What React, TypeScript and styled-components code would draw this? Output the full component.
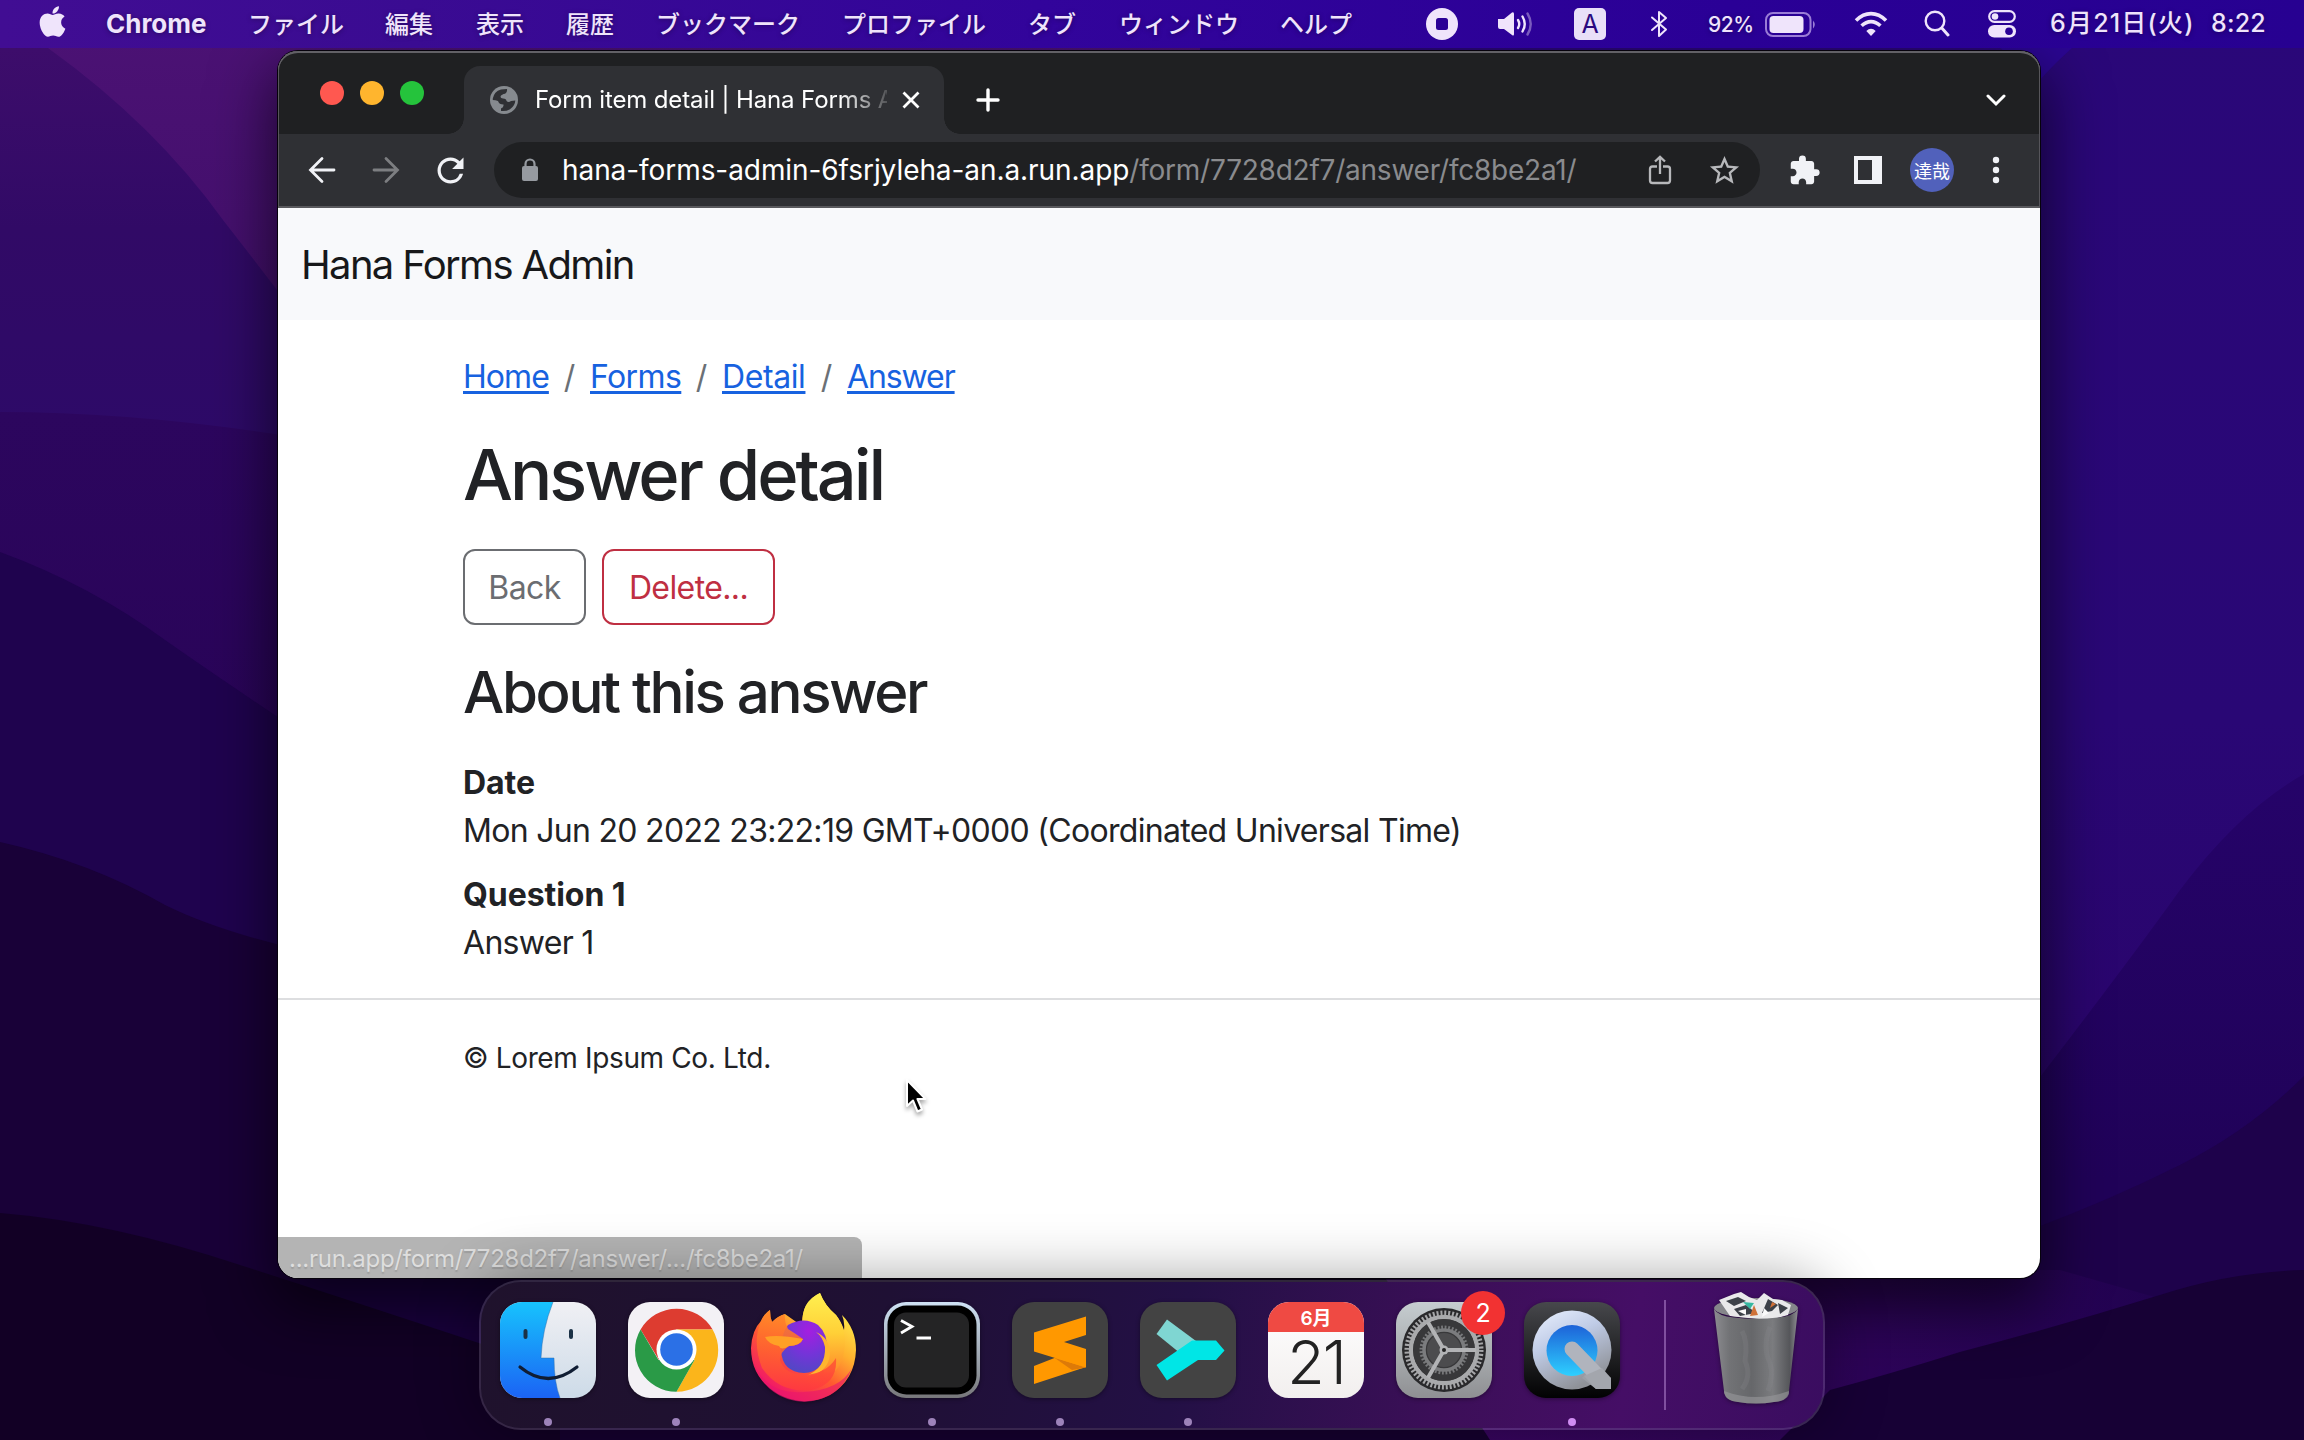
import React from "react";
import styled, { createGlobalStyle } from "styled-components";
import { FaApple } from "react-icons/fa";
import { MdExtension, MdRefresh, MdStarBorder } from "react-icons/md";

const GlobalStyle = createGlobalStyle`
  *, *::before, *::after { box-sizing: border-box; }
  body {
    margin: 0;
    overflow: hidden;
    font-family: Inter, "Noto Sans CJK JP", "Liberation Sans", sans-serif;
  }
`;

const Desktop = styled.div`
  position: relative;
  width: 2304px;
  height: 1440px;
  display: flex;
  flex-direction: column;
  overflow: hidden;
  background: #1a0140;
`;

const WallpaperSvg = styled.svg`
  position: absolute;
  inset: 0;
  z-index: 0;
`;

/* ---------- menu bar ---------- */

const MenuBar = styled.header`
  position: relative;
  z-index: 3;
  height: 48px;
  flex: none;
  display: flex;
  align-items: center;
  justify-content: space-between;
  padding: 0 0 2px 40px;
  background: linear-gradient(90deg, #410d93 0, #3a0b92 18%, #32049b 45%, #2a0096 75%, #270191 100%);
  color: #efe4fb;
  font-size: 24px;
  text-shadow: 0 1px 5px rgba(0, 0, 0, 0.35);
`;

const MenuList = styled.nav`
  display: flex;
  align-items: center;
`;

const AppleMark = styled.span`
  display: flex;
  width: 71px;
  margin: -3px 0 0 -5px;
`;

const AppName = styled.span`
  width: 142px;
  font-size: 26px;
  font-weight: 700;
  letter-spacing: 0;
`;

const MenuItem = styled.span<{ $w: number }>`
  width: ${(p) => p.$w}px;
  font-family: "Noto Sans CJK JP", sans-serif;
  font-weight: 500;
  line-height: 44px;
  white-space: nowrap;
`;

const StatusList = styled.div`
  display: flex;
  align-items: center;
  width: 886px;
`;

const StatusSlot = styled.span<{ $w: number }>`
  width: ${(p) => p.$w}px;
  height: 46px;
  flex: none;
  display: flex;
  align-items: center;
  justify-content: center;
  padding-top: 2px;
`;

const InputSource = styled.span`
  width: 32px;
  height: 32px;
  border-radius: 5px;
  display: flex;
  align-items: center;
  justify-content: center;
  background: #e9e0f8;
  color: #2b0a80;
  font-size: 25px;
  text-shadow: none;
`;

const Percent = styled.span`
  width: 56px;
  flex: none;
  padding-left: 4px;
  padding-top: 3px;
  font-size: 21px;
  font-weight: 500;
  letter-spacing: -0.4px;
`;

const Clock = styled.span<{ $w?: number }>`
  width: ${(p) => (p.$w ? `${p.$w}px` : "auto")};
  flex: none;
  font-size: 25px;
  line-height: 46px;
  font-weight: 500;
  letter-spacing: ${(p) => (p.$w ? "1.2px" : "0.2px")};
  white-space: nowrap;
`;

/* ---------- browser window ---------- */

const BrowserWindow = styled.main`
  position: relative;
  z-index: 1;
  flex: none;
  width: 1762px;
  height: 1227px;
  margin: 3px 0 0 278px;
  display: flex;
  flex-direction: column;
  border-radius: 20px;
  background: #fff;
  box-shadow: 0 0 0 1px #06020c, 0 24px 60px 6px rgba(0, 0, 0, 0.6);
`;

const TabStrip = styled.div`
  height: 83px;
  flex: none;
  display: flex;
  align-items: flex-end;
  background: #1f2022;
  border-radius: 20px 20px 0 0;
  box-shadow: inset 0 2px 0 #626166, inset 1px 0 0 #56555a, inset -1px 0 0 #56555a;
`;

const TrafficLights = styled.div`
  display: flex;
  gap: 16px;
  padding: 0 40px 29px 42px;
`;

const Light = styled.span<{ $c: string }>`
  width: 24px;
  height: 24px;
  border-radius: 50%;
  background: ${(p) => p.$c};
`;

const Tab = styled.div`
  position: relative;
  width: 480px;
  height: 68px;
  display: flex;
  align-items: center;
  padding: 0 22px 0 26px;
  border-radius: 16px 16px 0 0;
  background: #2f3034;
  color: #fff;
  &::before,
  &::after {
    content: "";
    position: absolute;
    bottom: 0;
    width: 16px;
    height: 16px;
  }
  &::before {
    left: -16px;
    background: radial-gradient(circle at 0 0, transparent 15.5px, #2f3034 16px);
  }
  &::after {
    right: -16px;
    background: radial-gradient(circle at 100% 0, transparent 15.5px, #2f3034 16px);
  }
`;

const Favicon = styled.span`
  display: flex;
  flex: none;
  margin-right: 17px;
`;

const TabTitle = styled.span`
  width: 352px;
  flex: none;
  margin: -1px 15px 0 0;
  overflow: hidden;
  white-space: nowrap;
  font-size: 24px;
  letter-spacing: -0.12px;
  mask-image: linear-gradient(90deg, #000 305px, transparent 362px);
`;

const StripButton = styled.span<{ $push?: boolean }>`
  width: 64px;
  height: 68px;
  display: flex;
  align-items: center;
  justify-content: center;
  margin-left: ${(p) => (p.$push ? "auto" : "12px")};
  margin-right: ${(p) => (p.$push ? "12px" : "0")};
`;

const Toolbar = styled.div`
  height: 74px;
  flex: none;
  display: flex;
  align-items: center;
  padding: 0 12px;
  background: #2f3034;
  border-bottom: 2px solid #59595d;
  box-shadow: inset 1px 0 0 #56555a, inset -1px 0 0 #56555a;
`;

const ToolButton = styled.span<{ $c?: string }>`
  width: 64px;
  height: 64px;
  flex: none;
  display: flex;
  align-items: center;
  justify-content: center;
  color: ${(p) => p.$c ?? "#f1f2f6"};
`;

const Omnibox = styled.div`
  width: 1266px;
  height: 56px;
  margin: 0 12px;
  padding: 0 4px 0 26px;
  display: flex;
  align-items: center;
  border-radius: 28px;
  background: #1f2022;
`;

const Url = styled.span`
  flex: 1;
  padding-left: 22px;
  font-size: 28px;
  letter-spacing: -0.07px;
  color: #fff;
  white-space: nowrap;
`;

const UrlPath = styled.span`
  color: #8a8b8e;
  letter-spacing: -0.23px;
`;

const Avatar = styled.span`
  width: 44px;
  height: 44px;
  border-radius: 50%;
  display: flex;
  align-items: center;
  justify-content: center;
  background: #5161bb;
  color: #fff;
  font: 400 18px/44px "Noto Sans CJK JP", sans-serif;
`;

/* ---------- page ---------- */

const Page = styled.div`
  flex: 1;
  display: flex;
  flex-direction: column;
  position: relative;
  overflow: hidden;
  border-radius: 0 0 20px 20px;
  color: #212225;
  font-size: 32px;
  line-height: 48px;
`;

const Navbar = styled.div`
  height: 112px;
  flex: none;
  display: flex;
  align-items: center;
  padding: 2px 23px 0;
  background: #f8f9fb;
  font-size: 40px;
  letter-spacing: -1.65px;
  color: #17181a;
`;

const Container = styled.section`
  padding: 33px 0 31px 185px;
`;

const Breadcrumb = styled.nav`
  display: flex;
  margin-bottom: 32px;
`;

const Crumb = styled.a<{ $w: number; $ls: number }>`
  width: ${(p) => p.$w}px;
  letter-spacing: ${(p) => p.$ls}px;
  color: #1762e0;
  text-decoration: underline;
  text-decoration-thickness: 3px;
  text-underline-offset: 3px;
`;

const CrumbSlash = styled.span`
  width: 41px;
  text-align: center;
  color: #6b7076;
`;

const Title = styled.h1`
  margin: 0 0 32px;
  font-size: 70.4px;
  line-height: 84px;
  font-weight: 550;
  letter-spacing: -3px;
`;

const Actions = styled.div`
  display: flex;
  gap: 16px;
  margin-bottom: 32px;
`;

const OutlineButton = styled.button<{ $c: string; $w: number }>`
  width: ${(p) => p.$w}px;
  height: 76px;
  padding: 1px 0 0;
  border: 2px solid ${(p) => p.$c};
  border-radius: 12px;
  background: transparent;
  color: ${(p) => p.$c};
  font: 400 32px/48px Inter, sans-serif;
  letter-spacing: -0.6px;
`;

const Subtitle = styled.h2`
  margin: 0 0 32px;
  font-size: 58.2px;
  line-height: 70px;
  font-weight: 550;
  letter-spacing: -2.3px;
`;

const Definition = styled.dl`
  margin: 0;
  display: flex;
  flex-direction: column;
`;

const Term = styled.dt`
  font-weight: 700;
  letter-spacing: -0.05px;
`;

const Detail = styled.dd`
  margin: 0 0 16px;
  letter-spacing: -0.7px;
  &:last-child {
    margin-bottom: 0;
  }
`;

const Footer = styled.footer`
  border-top: 2px solid #dddee0;
  padding: 37px 0 0 185px;
  font-size: 28px;
  line-height: 42px;
  letter-spacing: -0.36px;
`;

const StatusBubble = styled.div`
  position: absolute;
  left: 0;
  bottom: 0;
  width: 584px;
  height: 41px;
  padding-left: 11px;
  border-radius: 0 8px 0 0;
  background: #b4b4b4;
  color: #dedede;
  font-size: 24px;
  line-height: 43px;
  letter-spacing: -0.26px;
  white-space: nowrap;
  text-shadow: 0 2px 1px rgba(120, 120, 120, 0.35);
`;

const Cursor = styled.svg`
  position: absolute;
  left: 904px;
  top: 1077px;
  z-index: 4;
  filter: drop-shadow(0 3px 2px rgba(0, 0, 0, 0.35));
`;

/* ---------- dock ---------- */

const Dock = styled.div`
  position: relative;
  z-index: 2;
  flex: none;
  width: 1346px;
  height: 150px;
  margin: 2px 0 0 479px;
  padding: 0 0 0 3px;
  display: flex;
  border-radius: 42px;
  border: 2px solid rgba(255, 255, 255, 0.15);
  background: linear-gradient(100deg, #1f122c 0, #1f1034 30%, #231045 52%, #3c0f58 72%, #450e66 85%, #3a0d60 100%);
  background-clip: padding-box;
  box-shadow: 0 0 60px rgba(0, 0, 0, 0.38);
`;

const DockItem = styled.div<{ $lift?: number }>`
  position: relative;
  width: 128px;
  flex: none;
  display: flex;
  flex-direction: column;
  align-items: center;
  padding-top: ${(p) => 16 - (p.$lift ?? 0)}px;
`;

const Art = styled.svg`
  display: block;
  filter: drop-shadow(0 1px 2px rgba(0, 0, 0, 0.4));
`;

const RunningDot = styled.span<{ $bright?: boolean }>`
  width: 8px;
  height: 8px;
  margin-top: 8px;
  border-radius: 50%;
  background: ${(p) => (p.$bright ? "#d08df2" : "#9d83ba")};
`;

const CalendarTile = styled.div`
  width: 96px;
  height: 96px;
  margin-top: 4px;
  border-radius: 21px;
  overflow: hidden;
  display: flex;
  flex-direction: column;
  align-items: center;
  background: linear-gradient(#ffffff, #f2efee);
`;

const CalendarMonth = styled.span`
  width: 100%;
  height: 30px;
  background: #ef4a43;
  color: #fff;
  text-align: center;
  font: 600 19px/33px Inter, "Noto Sans CJK JP", sans-serif;
`;

const CalendarDay = styled.span`
  font-size: 61px;
  line-height: 60px;
  font-weight: 300;
  letter-spacing: -2px;
  color: #222;
`;

const Badge = styled.span`
  position: absolute;
  top: 9px;
  left: 81px;
  width: 44px;
  height: 44px;
  border-radius: 50%;
  background: #f23232;
  color: #fff;
  text-align: center;
  font-size: 25px;
  line-height: 44px;
`;

const DockDivider = styled.span`
  width: 2px;
  height: 110px;
  flex: none;
  margin: 18px 26px 0 28px;
  background: rgba(214, 170, 240, 0.42);
`;

const Wallpaper = () => (
  <WallpaperSvg width="2304" height="1440" viewBox="0 0 2304 1440">
    <defs>
      <linearGradient id="wpTop" x1="0" y1="0" x2="0" y2="1">
        <stop offset="0" stopColor="#4c1275" />
        <stop offset="1" stopColor="#3d0e66" />
      </linearGradient>
      <linearGradient id="wpA" x1="0" y1="0" x2="0" y2="1">
        <stop offset="0" stopColor="#3d0d6b" />
        <stop offset="0.45" stopColor="#310a66" />
        <stop offset="1" stopColor="#2d0a68" />
      </linearGradient>
      <linearGradient id="wpB" x1="0" y1="0" x2="0" y2="1">
        <stop offset="0" stopColor="#2c065e" />
        <stop offset="1" stopColor="#290458" />
      </linearGradient>
      <linearGradient id="wpRight" x1="0" y1="0" x2="0" y2="1">
        <stop offset="0" stopColor="#2a0779" />
        <stop offset="0.5" stopColor="#290775" />
        <stop offset="1" stopColor="#2b0263" />
      </linearGradient>
      <linearGradient id="wpRightLow" gradientUnits="userSpaceOnUse" x1="2304" y1="780" x2="2304" y2="1180">
        <stop offset="0" stopColor="#250369" />
        <stop offset="1" stopColor="#200258" />
      </linearGradient>
      <linearGradient id="wpBottom" x1="0" y1="0" x2="1" y2="0">
        <stop offset="0" stopColor="#43046a" />
        <stop offset="0.55" stopColor="#33055c" />
        <stop offset="1" stopColor="#200250" />
      </linearGradient>
    </defs>
    <rect width="1200" height="460" fill="url(#wpTop)" />
    <path d="M0 48 H48 Q155 125 223 220 Q262 270 300 320 V450 H0Z" fill="url(#wpA)" />
    <path d="M0 412 Q140 412 300 438 V760 H0Z" fill="url(#wpB)" />
    <path d="M0 552 Q90 585 165 640 Q215 675 300 732 V980 H0Z" fill="#1f034e" />
    <path d="M0 842 Q90 862 165 905 Q215 930 300 950 V1400 H0Z" fill="#190138" />
    <path d="M0 1213 Q110 1222 240 1265 Q380 1310 560 1370 T1500 1440 H0Z" fill="#120025" />
    <rect x="1200" y="0" width="1104" height="1440" fill="url(#wpRight)" />
    <path d="M2000 48 H2072 Q2054 64 2040 80Z" fill="#2b0692" />
    <path d="M2304 774 Q2240 810 2180 890 Q2130 960 2030 1090 V1440 H2304Z" fill="url(#wpRightLow)" />
    <path d="M2304 1076 Q2250 1130 2180 1165 Q2110 1200 2030 1230 V1440 H2304Z" fill="#1e024b" />
    <path d="M1100 1270 H2060 L2200 1310 L2040 1440 H1100Z" fill="url(#wpBottom)" />
    <path d="M560 1270 H1380 L1490 1440 H560Z" fill="#160030" />
    <path d="M2304 1270 Q2230 1272 2160 1295 Q2060 1326 1960 1352 Q1890 1374 1830 1390 L1780 1440 H2304Z" fill="#170135" />
  </WallpaperSvg>
);

const VolumeIcon = () => (
  <svg width="38" height="30" viewBox="0 0 38 30" fill="none" strokeLinecap="round">
    <path d="M1 10 H7 L15 3.5 Q17 2.500 17 5 V25 Q17 27.500 15 26 L7 20 H3 Q1 20 1 18Z" fill="#efe4fb" />
    <path d="M21 11 Q23.500 15 21 19" stroke="#efe4fb" strokeWidth="2.400" />
    <path d="M25.500 7.500 Q30 15 25.500 22.500" stroke="#efe4fb" strokeWidth="2.400" />
    <path d="M30.500 4.500 Q37 15 30.500 25.500" stroke="#efe4fb" strokeWidth="2.400" opacity=".4" />
  </svg>
);

const BluetoothIcon = () => (
  <svg width="18" height="28" viewBox="0 0 18 28" fill="none" stroke="#efe4fb" strokeWidth="2" strokeLinejoin="round" strokeLinecap="round">
    <path d="M2 7.500 L16 19.500 L9 26 V2 L16 8 L2 20" />
  </svg>
);

const BatteryIcon = () => (
  <svg width="52" height="25" viewBox="0 0 52 25" fill="none">
    <rect x="1" y="1" width="44.500" height="23" rx="7" stroke="#9a7cd6" strokeWidth="2" />
    <rect x="4.500" y="4" width="34" height="17" rx="4" fill="#efe4fb" />
    <path d="M48 8.500 Q51.500 12.500 48 16.500Z" fill="#9a7cd6" />
  </svg>
);

const WifiIcon = () => (
  <svg width="34" height="26" viewBox="0 0 34 26" fill="none" stroke="#efe4fb" strokeWidth="3.600">
    <path d="M2 9.500 Q9 2.600 17 2.600 Q25 2.600 32 9.500" />
    <path d="M7.600 14.800 Q12 10.600 17 10.600 Q22 10.600 26.400 14.800" />
    <path d="M12.300 20 Q17 15.500 21.700 20 L17 25Z" fill="#efe4fb" stroke="none" />
  </svg>
);

const SearchIcon = () => (
  <svg width="26" height="28" viewBox="0 0 26 28" fill="none" stroke="#efe4fb" strokeWidth="2.400" strokeLinecap="round">
    <circle cx="11" cy="11" r="9.300" />
    <path d="M17.800 18 L24 25" strokeWidth="3" />
  </svg>
);

const ControlIcon = () => (
  <svg width="28" height="28" viewBox="0 0 28 28">
    <rect x="1.200" y="1.200" width="25.600" height="10.600" rx="5.300" fill="none" stroke="#efe4fb" strokeWidth="2.200" />
    <circle cx="7" cy="6.500" r="3.300" fill="#efe4fb" />
    <rect x="0" y="15" width="28" height="12.500" rx="6.250" fill="#efe4fb" />
    <circle cx="21" cy="21.250" r="3.800" fill="#2a0096" />
  </svg>
);

const GlobeIcon = () => (
  <svg width="28" height="28" viewBox="0 0 28 28">
    <circle cx="14" cy="14" r="14" fill="#868a8f" />
    <path d="M2.800 12.500 Q4 5.500 11 3.400 L17 3 Q17.500 7.500 13.500 8 L11 9.500 Q9.500 12.500 13 12.500 Q16.500 12.500 16.500 15 Q18.500 16.800 21 15 L25.300 14.500 Q25 20 20 23.200 Q16 25.600 11 25 V22.500 Q14 21.500 13.500 18.500 Q9 18.500 8 15 Q5.500 14 2.800 14Z" fill="#2f3034" />
  </svg>
);

const FinderArt = () => (
  <Art width="98" height="112" viewBox="-1 -4 98 112">
    <defs>
      <linearGradient id="fiB" x1="0" y1="0" x2="0" y2="1">
        <stop offset="0" stopColor="#17c3fd" />
        <stop offset="1" stopColor="#1b63f4" />
      </linearGradient>
      <linearGradient id="fiW" x1="0" y1="0" x2="0" y2="1">
        <stop offset="0" stopColor="#f0f0f4" />
        <stop offset="1" stopColor="#cddbe8" />
      </linearGradient>
      <clipPath id="fiC">
        <rect width="96" height="96" rx="22" />
      </clipPath>
    </defs>
    <g clipPath="url(#fiC)">
      <rect width="96" height="96" fill="url(#fiW)" />
      <path d="M0 0 H53 Q42 28 41 56 H54 Q54 80 60 96 H0Z" fill="url(#fiB)" />
    </g>
    <path d="M53 0 Q42 28 41 56 H54 Q54 80 60 96" fill="none" stroke="#2d6ea8" strokeWidth=".8" opacity=".6" />
    <path d="M25.500 29 V35 M71 29 V35" stroke="#1b3146" strokeWidth="4" strokeLinecap="round" />
    <path d="M20 65 Q48 88 77 65" fill="none" stroke="#101d33" strokeWidth="3.200" strokeLinecap="round" />
  </Art>
);

const ChromeArt = () => (
  <Art width="98" height="112" viewBox="-1 -4 98 112">
    <rect width="96" height="96" rx="22" fill="#f3f1f5" />
    <path d="M12.600 27.500 A41.500 41.500 0 0 1 84.600 27.500 L48.500 27.500 L31 58Z" fill="#dd3c30" />
    <path d="M84.600 27.500 A41.500 41.500 0 0 1 48.500 89.800 L66.500 58 L48.500 27.500Z" fill="#fbb51b" />
    <path d="M48.500 89.800 A41.500 41.500 0 0 1 12.600 27.500 L30.500 58 L66.500 58Z" fill="#2a9a47" />
    <circle cx="48.500" cy="47.500" r="20" fill="#fff" />
    <circle cx="48.500" cy="47.500" r="16.300" fill="#2b70e6" />
  </Art>
);

const FirefoxArt = () => (
  <Art width="108" height="112" viewBox="0 0 108 112">
    <defs>
      <linearGradient id="ffA" x1=".85" y1=".1" x2=".25" y2=".95">
        <stop offset="0" stopColor="#fff04c" />
        <stop offset=".35" stopColor="#ffb02e" />
        <stop offset=".62" stopColor="#ff5a30" />
        <stop offset="1" stopColor="#f0146a" />
      </linearGradient>
      <radialGradient id="ffG" cx=".6" cy=".2" r=".9">
        <stop offset="0" stopColor="#a41ee0" />
        <stop offset=".5" stopColor="#7434d8" />
        <stop offset="1" stopColor="#4a4cc0" />
      </radialGradient>
      <linearGradient id="ffH" x1="0" y1="0" x2="0" y2="1">
        <stop offset="0" stopColor="#ff8a26" />
        <stop offset=".5" stopColor="#ff6230" />
        <stop offset="1" stopColor="#ff3a3e" />
      </linearGradient>
      <linearGradient id="ffY" x1="0" y1="0" x2="0" y2="1">
        <stop offset="0" stopColor="#fff050" />
        <stop offset=".5" stopColor="#ffd037" />
        <stop offset="1" stopColor="#ff8a2a" />
      </linearGradient>
    </defs>
    <path d="M70 1 Q75 14 86 23 Q91 29 94 38 Q95 30 92 23 Q106 37 106 58 Q105 88 80 103 Q54 116 28 102 Q1 86 1 56 Q2 38 11 29 Q14 22 20 18 Q20 25 22 30 Q28 24 35 22 L52 34 Q51 10 70 1Z" fill="url(#ffA)" />
    <path d="M70 1 Q75 14 86 23 Q100 42 92 68 Q86 84 74 80 Q66 46 53 34 Q50 10 70 1Z" fill="url(#ffY)" />
    <path d="M38 33 Q54 24 68 33 Q78 42 77 58 Q74 80 54 81 Q32 80 31 58 Q31 42 38 33Z" fill="url(#ffG)" />
    <path d="M66 40 Q80 46 80 62 Q78 82 56 84 Q76 76 75 55 Q73 45 66 40Z" fill="#ffb62e" />
    <path d="M11 29 Q14 22 20 18 Q20 25 22 30 Q28 24 35 22 Q34 30 38 37 Q46 42 53 47 Q50 54 39 54 Q30 60 30 68 Q34 82 54 83 Q76 82 86 66 Q88 92 62 98 Q30 102 12 76 Q2 50 11 29Z" fill="url(#ffH)" opacity=".9" />
    <path d="M15 45 Q28 42 53 47 Q50 54 39 54 Q31 59 29 54 Q18 52 15 45Z" fill="#ffa026" />
    <path d="M3 70 Q16 103 54 100 Q90 98 102 76 Q90 108 54 110 Q16 108 3 70Z" fill="#e8156e" opacity=".6" />
  </Art>
);

const TerminalArt = () => (
  <Art width="98" height="112" viewBox="-1 -4 98 112">
    <defs>
      <linearGradient id="teF" x1="0" y1="0" x2="0" y2="1">
        <stop offset="0" stopColor="#cfe2f5" />
        <stop offset="1" stopColor="#77777a" />
      </linearGradient>
    </defs>
    <rect width="96" height="96" rx="22" fill="url(#teF)" />
    <rect x="3.500" y="3.500" width="89" height="89" rx="19" fill="#000" />
    <rect x="10" y="10.500" width="75" height="75" rx="12" fill="#242425" />
    <path d="M17 18.500 L28 24.500 L17 31" fill="none" stroke="#fff" strokeWidth="2.800" />
    <path d="M32.500 36 H47" stroke="#fff" strokeWidth="3" />
  </Art>
);

const SublimeArt = () => (
  <Art width="98" height="112" viewBox="-1 -4 98 112">
    <rect width="96" height="96" rx="22" fill="#414141" />
    <path d="M22 64 L45 55 L74 65 L22 82Z" fill="#ff9800" />
    <path d="M42 55.500 L74 65.500 L60 68Z" fill="#dd7a08" />
    <path d="M74 14.500 V33 L52 40 L74 47 V65.500 L22 49.500 V30.500Z" fill="#ff9800" />
  </Art>
);

const MergeArt = () => (
  <Art width="98" height="112" viewBox="-1 -4 98 112">
    <rect width="96" height="96" rx="22" fill="#434343" />
    <path d="M27 17.500 L56 39 L38 49.500 L16.500 32Z" fill="#7fd6d2" />
    <path d="M52 38.500 H76 L84.500 48.500 L76 58 H58 L27 78.500 L16.500 63Z" fill="#00e6e6" />
  </Art>
);

const SettingsArt = () => (
  <Art width="98" height="112" viewBox="-1 -4 98 112">
    <defs>
      <linearGradient id="seG" x1="0" y1="0" x2="0" y2="1">
        <stop offset="0" stopColor="#c6cdd0" />
        <stop offset="1" stopColor="#8f9093" />
      </linearGradient>
    </defs>
    <rect width="96" height="96" rx="22" fill="url(#seG)" />
    <g transform="translate(48 48)" fill="none">
      <circle r="42" fill="#29292b" />
      <circle r="37" stroke="#a5a6a8" strokeWidth="5" strokeDasharray="2 1.875" />
      <circle r="33" stroke="#a9aaac" strokeWidth="4.500" />
      <circle r="31" fill="#38383a" />
      <circle r="22.500" stroke="#77787a" strokeWidth="4" strokeDasharray="1.800 1.734" />
      <circle r="20" stroke="#7b7c7e" strokeWidth="3.500" />
      <circle r="17" fill="#4c4c4e" />
      <path d="M0 0 H32 M0 0 L-16 -27.700 M0 0 L-16 27.700" stroke="#b2b3b5" strokeWidth="4" />
      <circle r="4.500" fill="#b2b3b5" />
      <circle r="2" fill="#222" />
    </g>
  </Art>
);

const QuickTimeArt = () => (
  <Art width="98" height="112" viewBox="-1 -4 98 112">
    <defs>
      <linearGradient id="qtK" x1="0" y1="0" x2="0" y2="1">
        <stop offset="0" stopColor="#47484c" />
        <stop offset="1" stopColor="#020203" />
      </linearGradient>
      <linearGradient id="qtS" x1="0" y1="0" x2=".5" y2="1">
        <stop offset="0" stopColor="#eaf1ff" />
        <stop offset=".45" stopColor="#bfcbe6" />
        <stop offset="1" stopColor="#8f9298" />
      </linearGradient>
      <linearGradient id="qtB" x1="0" y1="0" x2="0" y2="1">
        <stop offset="0" stopColor="#1d62d8" />
        <stop offset="1" stopColor="#2ed0ff" />
      </linearGradient>
    </defs>
    <rect width="96" height="96" rx="22" fill="url(#qtK)" />
    <circle cx="48" cy="48" r="39.500" fill="url(#qtS)" />
    <path d="M66 66 L87 76 V87 H72 L58 76Z" fill="#9c9fa6" />
    <circle cx="48" cy="48.500" r="25.500" fill="url(#qtB)" />
    <path d="M48 47 L76 76" stroke="#b0b4bd" strokeWidth="15" strokeLinecap="round" />
    <path d="M60 74 L72 87 H87 V76 L78 66Z" fill="#a3a6ad" />
  </Art>
);

const TrashArt = () => (
  <Art width="88" height="116" viewBox="0 0 88 116">
    <defs>
      <linearGradient id="trB" x1="0" y1="0" x2="1" y2="0">
        <stop offset="0" stopColor="#8c8c90" />
        <stop offset=".18" stopColor="#727376" />
        <stop offset=".45" stopColor="#66676a" />
        <stop offset=".7" stopColor="#7b7c7f" />
        <stop offset=".9" stopColor="#55565a" />
        <stop offset="1" stopColor="#8f8f94" />
      </linearGradient>
    </defs>
    <ellipse cx="44" cy="17" rx="42" ry="10" fill="#85868a" />
    <path d="M7 9 L22 3 L29 1 L37 6 L45 9 L52 2 L61 8 L70 9 L79 14 L76 24 L58 29 L36 27 L18 25Z" fill="#e9e9ea" />
    <path d="M14 10 L26 6 L34 10 L22 15Z M56 8 L66 14 L60 20 L50 22Z M22 18 L34 14 L44 22 L28 25Z M66 12 L76 17 L68 23Z" fill="#3c4148" />
    <path d="M31 11 L42 12 L38 18Z" fill="#35b8a0" />
    <path d="M42 14 L46 24 L38 25Z M60 11 L64 13 L58 17Z" fill="#cf7138" />
    <path d="M26 20 L34 18 L34 24Z M52 17 L57 22 L50 26Z" fill="#fafafa" />
    <path d="M2 18 Q6 25 22 26.500 Q44 29 66 26.500 Q82 25 86 18 L77 100 Q76 110 62 111 Q44 114 26 111 Q13 110 12 100Z" fill="url(#trB)" />
    <path d="M12 100 Q44 112 77 100 L77 103 Q75 110 62 111 Q44 114 26 111 Q14 110 12 102Z" fill="#97989b" opacity=".6" />
    <path d="M30 40 Q36 50 33 70 Q40 85 30 98 M58 36 Q50 56 58 72 Q62 84 56 100" fill="none" stroke="#8d8e91" strokeWidth="5" opacity=".22" />
  </Art>
);

const menus: [string, number][] = [
  ["ファイル", 137],
  ["編集", 91],
  ["表示", 90],
  ["履歴", 90],
  ["ブックマーク", 186],
  ["プロファイル", 186],
  ["タブ", 91],
  ["ウィンドウ", 161],
  ["ヘルプ", 80],
];

const crumbs: [string, number, number][] = [
  ["Home", 86, -0.95],
  ["Forms", 91, -0.6],
  ["Detail", 84, -0.4],
  ["Answer", 108, -1.1],
];

export default function App() {
  return (
    <Desktop>
      <GlobalStyle />
      <Wallpaper />
      <MenuBar>
        <MenuList>
          <AppleMark><FaApple size={35} /></AppleMark>
          <AppName>Chrome</AppName>
          {menus.map(([label, w]) => (
            <MenuItem key={label} $w={w}>{label}</MenuItem>
          ))}
        </MenuList>
        <StatusList>
          <StatusSlot $w={48}>
            <svg width="32" height="32" viewBox="0 0 32 32">
              <circle cx="16" cy="16" r="16" fill="#efe4fb" />
              <rect x="10" y="10" width="12" height="12" rx="2.500" fill="#2b0096" />
            </svg>
          </StatusSlot>
          <StatusSlot $w={100}><VolumeIcon /></StatusSlot>
          <StatusSlot $w={48}><InputSource>A</InputSource></StatusSlot>
          <StatusSlot $w={90}><BluetoothIcon /></StatusSlot>
          <Percent>92%</Percent>
          <StatusSlot $w={62}><BatteryIcon /></StatusSlot>
          <StatusSlot $w={98}><WifiIcon /></StatusSlot>
          <StatusSlot $w={34}><SearchIcon /></StatusSlot>
          <StatusSlot $w={96}><ControlIcon /></StatusSlot>
          <Clock $w={161}>6月21日(火)</Clock>
          <Clock>8:22</Clock>
        </StatusList>
      </MenuBar>

      <BrowserWindow>
        <TabStrip>
          <TrafficLights>
            <Light $c="#ff5850" />
            <Light $c="#ffb52e" />
            <Light $c="#25c33c" />
          </TrafficLights>
          <Tab>
            <Favicon><GlobeIcon /></Favicon>
            <TabTitle>Form item detail | Hana Forms Admin</TabTitle>
            <svg width="18" height="18" viewBox="0 0 18 18" stroke="#fff" strokeWidth="2.800">
              <path d="M1.500 1.500 L16.500 16.500 M16.500 1.500 L1.500 16.500" />
            </svg>
          </Tab>
          <StripButton>
            <svg width="24" height="24" viewBox="0 0 24 24" stroke="#fff" strokeWidth="3.400" strokeLinecap="round">
              <path d="M12 2 V22 M2 12 H22" />
            </svg>
          </StripButton>
          <StripButton $push>
            <svg width="20" height="14" viewBox="0 0 20 14" fill="none" stroke="#fff" strokeWidth="3" strokeLinecap="round">
              <path d="M2 3 L10 11 L18 3" />
            </svg>
          </StripButton>
        </TabStrip>
        <Toolbar>
          <ToolButton>
            <svg width="28" height="28" viewBox="0 0 28 28" fill="none" stroke="currentColor" strokeWidth="2.800" strokeLinecap="round">
              <path d="M26 14 H3 M14 2.500 L2.500 14 L14 25.500" />
            </svg>
          </ToolButton>
          <ToolButton $c="#7d7e81">
            <svg width="28" height="28" viewBox="0 0 28 28" fill="none" stroke="currentColor" strokeWidth="2.800" strokeLinecap="round">
              <path d="M2 14 H25 M14 2.500 L25.500 14 L14 25.500" />
            </svg>
          </ToolButton>
          <ToolButton><MdRefresh size={39} /></ToolButton>
          <Omnibox>
            <svg width="20" height="24" viewBox="0 0 20 24">
              <rect x="2" y="8" width="16" height="15" rx="2" fill="#969aa0" />
              <path d="M5.500 9 V6 A4.500 4.500 0 0 1 14.500 6 V9" fill="none" stroke="#969aa0" strokeWidth="2.200" />
            </svg>
            <Url>
              hana-forms-admin-6fsrjyleha-an.a.run.app<UrlPath>/form/7728d2f7/answer/fc8be2a1/</UrlPath>
            </Url>
            <ToolButton $c="#b7b8bb">
              <svg width="24" height="30" viewBox="0 0 24 30" fill="none" stroke="currentColor" strokeWidth="2.300">
                <path d="M9 11.500 H4.500 Q2 11.500 2 14 V25.500 Q2 28 4.500 28 H19.500 Q22 28 22 25.500 V14 Q22 11.500 19.500 11.500 H15 M12 19 V2 M7 6.500 L12 1.800 L17 6.500" />
              </svg>
            </ToolButton>
            <ToolButton $c="#b7b8bb"><MdStarBorder size={35} /></ToolButton>
          </Omnibox>
          <ToolButton><MdExtension size={33} /></ToolButton>
          <ToolButton>
            <svg width="28" height="28" viewBox="0 0 28 28">
              <path fillRule="evenodd" fill="currentColor" d="M0 0 H28 V28 H0Z M4 4 V24 H18 V4Z" />
            </svg>
          </ToolButton>
          <ToolButton><Avatar>達哉</Avatar></ToolButton>
          <ToolButton>
            <svg width="8" height="28" viewBox="0 0 8 28" fill="currentColor">
              <circle cx="4" cy="4" r="3.200" />
              <circle cx="4" cy="14" r="3.200" />
              <circle cx="4" cy="24" r="3.200" />
            </svg>
          </ToolButton>
        </Toolbar>
        <Page>
          <Navbar>Hana Forms Admin</Navbar>
          <Container>
            <Breadcrumb>
              {crumbs.map(([label, w, ls], i) => (
                <React.Fragment key={label}>
                  {i > 0 && <CrumbSlash>/</CrumbSlash>}
                  <Crumb $w={w} $ls={ls}>{label}</Crumb>
                </React.Fragment>
              ))}
            </Breadcrumb>
            <Title>Answer detail</Title>
            <Actions>
              <OutlineButton $c="#6b6d71" $w={123}>Back</OutlineButton>
              <OutlineButton $c="#bf2f42" $w={173}>Delete...</OutlineButton>
            </Actions>
            <Subtitle>About this answer</Subtitle>
            <Definition>
              <Term>Date</Term>
              <Detail>Mon Jun 20 2022 23:22:19 GMT+0000 (Coordinated Universal Time)</Detail>
              <Term>Question 1</Term>
              <Detail>Answer 1</Detail>
            </Definition>
          </Container>
          <Footer>© Lorem Ipsum Co. Ltd.</Footer>
          <StatusBubble>...run.app/form/7728d2f7/answer/.../fc8be2a1/</StatusBubble>
        </Page>
      </BrowserWindow>

      <Dock>
        <DockItem><FinderArt /><RunningDot /></DockItem>
        <DockItem><ChromeArt /><RunningDot /></DockItem>
        <DockItem $lift={6}><FirefoxArt /></DockItem>
        <DockItem><TerminalArt /><RunningDot /></DockItem>
        <DockItem><SublimeArt /><RunningDot /></DockItem>
        <DockItem><MergeArt /><RunningDot /></DockItem>
        <DockItem>
          <CalendarTile>
            <CalendarMonth>6月</CalendarMonth>
            <CalendarDay>21</CalendarDay>
          </CalendarTile>
        </DockItem>
        <DockItem><SettingsArt /><Badge>2</Badge></DockItem>
        <DockItem><QuickTimeArt /><RunningDot $bright /></DockItem>
        <DockDivider />
        <DockItem $lift={7}><TrashArt /></DockItem>
      </Dock>

      <Cursor width="26" height="40" viewBox="0 0 26 40">
        <path d="M3 3 V29 L9 23.500 L13.500 34.500 L18 32.500 L13.500 22 H21.500Z" fill="#000" stroke="#fff" strokeWidth="2" strokeLinejoin="round" />
      </Cursor>
    </Desktop>
  );
}
